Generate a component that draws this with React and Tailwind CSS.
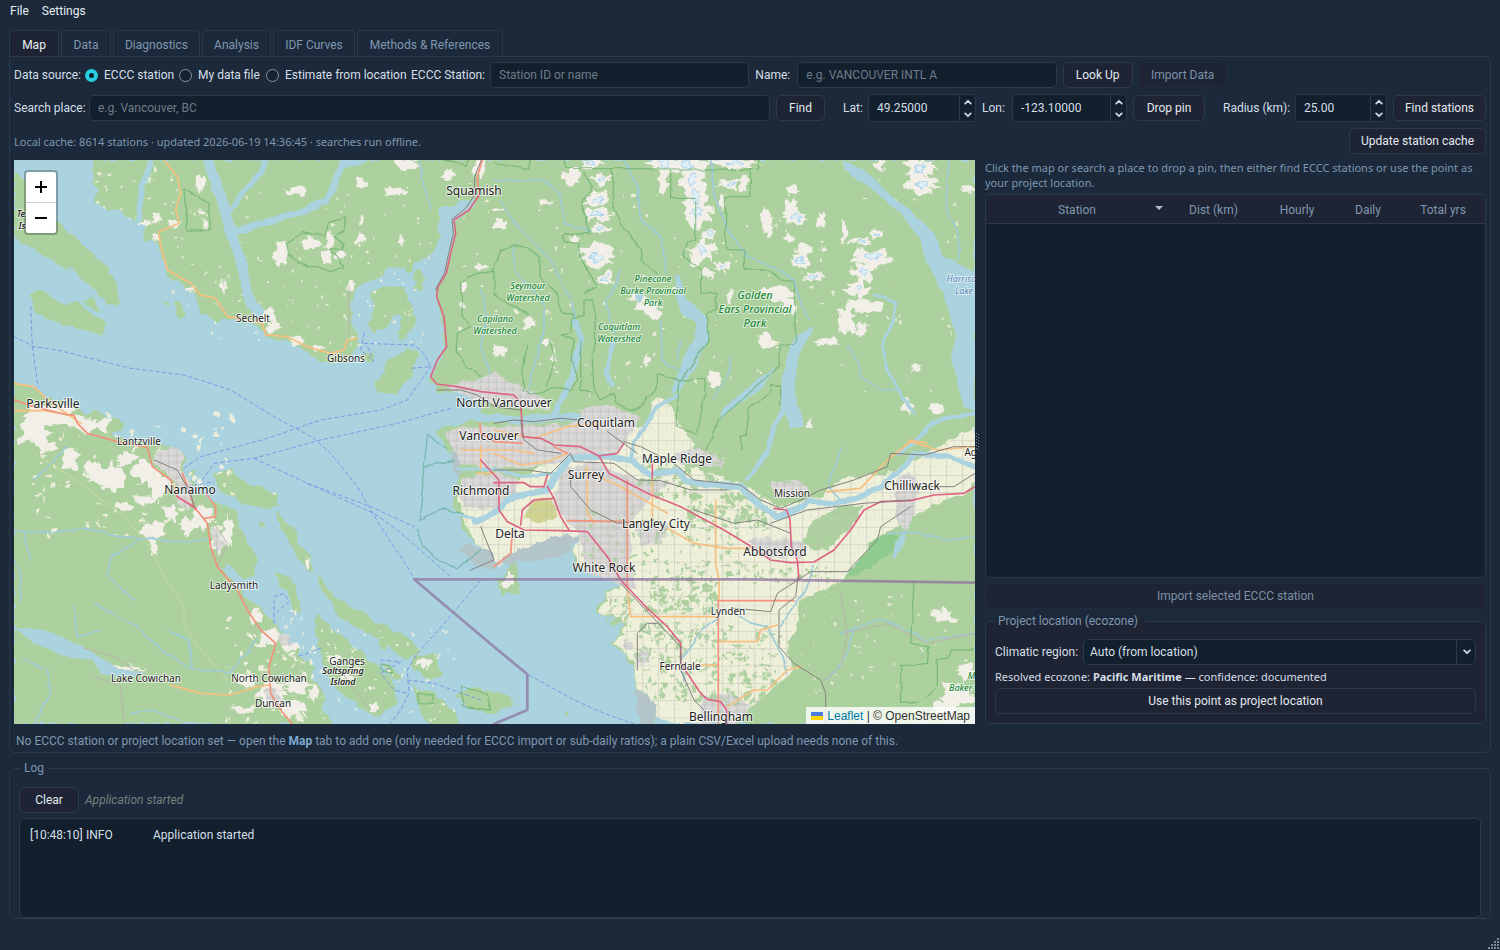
import React, { useState } from "react";

/* ---------- Map data ---------- */

// Geometry is stored in map units, three to a screen pixel.
const MAINLAND =
  "M240 0 L236 60 250 95 240 130 300 150 330 165 372 180 390 200 395 240 432 250 442 295 458 345 500 368 530 392 552 432 566 462 600 478 645 482 700 490 742 504 752 532 820 542 880 580 935 608 990 612 1018 585 1032 556 1028 520 1018 480 1014 430 1020 395 1050 370 1100 350 1130 325 1172 325 1192 335 1202 308 1240 290 1262 268 1280 225 1272 160 1290 142 1340 128 1385 108 1378 148 1325 172 1318 225 1308 285 1292 345 1266 392 1268 425 1288 485 1294 560 1270 618 1248 652 1262 680 1270 700 1340 692 1385 705 1400 735 1390 775 1350 795 1290 798 1265 812 1280 835 1300 870 1330 892 1336 930 1325 990 1320 1045 1342 1080 1352 1115 1380 1145 1430 1170 1455 1195 1440 1220 1480 1190 1500 1200 1515 1250 1520 1300 1462 1305 1450 1260 1480 1230 1500 1195 1560 1165 1640 1130 1690 1115 1700 1140 1675 1170 1680 1225 1740 1240 1780 1240 1822 1272 1770 1305 1750 1350 1750 1365 1810 1370 1830 1392 1820 1425 1785 1445 1840 1490 1860 1520 1868 1610 1890 1692 1920 1692 1945 1625 1990 1630 2040 1670 2070 1692 2883 1692 2883 0 Z";
const ISLAND =
  "M0 662 L60 680 100 712 180 732 215 760 250 755 322 792 328 812 290 812 300 832 400 850 470 862 512 885 520 905 505 935 520 960 545 965 552 995 580 1012 612 1030 670 1050 678 1100 700 1150 732 1200 715 1245 690 1255 640 1225 622 1220 680 1290 740 1350 780 1400 850 1462 858 1492 900 1520 895 1560 930 1595 925 1640 958 1692 0 1692 Z";
const ISLETS = [
  "M0 40 L60 80 130 180 200 250 280 320 305 360 318 400 312 440 280 432 240 390 170 332 110 300 60 270 0 225Z",
  "M45 405 L62 390 100 400 150 432 195 428 230 460 278 492 270 528 205 508 150 492 92 480 60 455Z",
  "M445 415 L462 418 468 438 455 432Z",
  "M482 422 L502 430 508 470 496 478 480 450Z",
  "M1068 392 L1120 375 1170 382 1190 430 1206 490 1180 530 1150 540 1165 470 1135 470 1120 500 1090 510 1075 530 1062 490 1082 440Z",
  "M1200 342 L1216 332 1230 350 1225 400 1202 388Z",
  "M1112 602 L1160 578 1212 565 1205 610 1188 655 1150 698 1090 698 1084 668 1112 640Z",
  "M1030 590 L1060 578 1082 590 1070 602 1040 602Z",
  "M205 425 L235 412 262 455 240 450Z",
  "M520 930 L540 935 538 955 524 950Z",
  "M600 938 L652 928 700 970 792 1002 790 1045 740 1045 680 1032 612 990Z",
  "M780 1055 L820 1080 860 1150 902 1220 892 1238 860 1210 822 1132 785 1080Z",
  "M915 1245 L960 1312 1030 1350 1100 1390 1192 1440 1215 1480 1170 1492 1080 1432 980 1372 920 1285Z",
  "M785 1235 L822 1250 850 1290 862 1362 840 1352 820 1302 792 1272Z",
  "M728 1080 L758 1100 752 1108 730 1090Z",
  "M905 1360 L950 1400 1000 1440 1062 1500 1135 1562 1148 1630 1100 1670 1050 1650 1000 1612 950 1572 922 1492 905 1412Z",
  "M1190 1492 L1262 1478 1292 1540 1242 1562 1200 1532Z",
  "M1200 1572 L1262 1600 1302 1640 1345 1692 1240 1692 1212 1632Z",
  "M1330 1600 L1400 1580 1505 1632 1440 1662 1360 1642Z",
  "M1100 1512 L1140 1522 1170 1560 1130 1552Z",
  "M1090 1440 L1120 1452 1118 1470 1095 1460Z",
  "M1440 1595 L1500 1610 1480 1625 1440 1615Z",
  "M1650 1650 L1665 1655 1660 1670 1648 1665Z",
];
const FARM =
  "M1560 930 L1640 905 1840 810 1900 790 1925 710 1975 740 1995 790 2040 850 2020 920 2180 970 2290 1040 2420 1010 2480 960 2620 940 2740 880 2883 800 2883 960 2840 1010 2770 1030 2680 1080 2600 1130 2520 1220 2470 1270 2360 1320 2340 1400 2320 1480 2340 1530 2280 1580 2220 1640 2140 1692 2000 1692 1920 1670 1870 1610 1860 1500 1795 1445 1830 1425 1835 1392 1812 1365 1755 1362 1775 1308 1828 1272 1790 1236 1690 1230 1680 1170 1700 1130 1540 1160 1460 1220 1380 1140 1345 1070 1335 1010 1440 1020Z";
const URBAN = [
  "M1290 680 L1400 655 1440 640 1500 670 1560 700 1600 722 1612 745 1500 745 1400 725Z",
  "M1290 812 L1360 800 1470 800 1700 790 1700 745 1800 740 1880 770 1850 830 1800 880 1680 895 1600 920 1440 925 1345 910 1310 862Z",
  "M1345 950 L1450 940 1520 960 1500 1005 1440 1045 1345 1045Z",
  "M1640 925 L1740 905 1840 955 1980 965 1910 1010 1850 1090 1850 1200 1865 1290 1720 1235 1695 1120 1620 1040Z",
  "M1860 1090 L1960 1085 1960 1130 1880 1160Z",
  "M1980 880 L2060 860 2140 890 2120 920 2000 915Z",
  "M2200 1140 L2260 1130 2350 1140 2380 1150 2370 1190 2250 1195Z",
  "M2270 970 L2330 955 2385 980 2370 1010 2280 1015Z",
  "M2640 960 L2690 940 2720 980 2700 1060 2680 1110 2650 1090Z",
  "M2060 1610 L2160 1600 2210 1640 2170 1692 2060 1692Z",
  "M430 870 L490 862 512 890 500 930 540 980 530 1050 490 1030 480 960 420 900Z",
  "M590 1100 L615 1110 635 1160 605 1180Z",
  "M1830 1440 L1850 1440 1850 1465 1830 1465Z",
  "M1860 1480 L1900 1470 1910 1510 1870 1520Z",
  "M785 1420 L820 1425 840 1455 800 1450Z",
  "M745 1590 L790 1580 800 1630 775 1640Z",
];
const FLATS = [
  "M1455 1215 L1480 1180 1560 1155 1660 1120 1700 1130 1672 1165 1640 1190 1560 1200Z",
  "M1330 1170 L1370 1150 1440 1180 1440 1230 1380 1210Z",
  "M1860 1590 L1900 1600 1930 1640 1920 1692 1880 1692Z",
  "M1320 880 L1345 900 1335 960 1320 950Z",
];
const HILLS = [
  "M2370 1140 L2400 1080 2480 1040 2550 1035 2530 1080 2490 1120 2440 1165 2400 1172Z",
  "M2180 840 L2290 800 2600 820 2610 880 2500 940 2380 960 2250 970 2190 960 2120 900 2040 860Z",
];

const LAKES = [
  "M2480 0 L2550 30 2620 100 2690 150 2760 220 2790 290 2850 320 2883 335 2883 755 2850 742 2812 600 2825 530 2790 400 2740 310 2720 240 2660 160 2580 90 2490 30Z",
  "M2400 500 L2380 540 2350 600 2342 700 2370 800 2330 805 2300 720 2305 640 2325 580 2340 530Z",
  "M2292 618 L2240 690 2160 742 2112 782 2128 742 2190 690 2250 645Z",
  "M1985 345 L1996 345 2012 420 2080 465 2084 540 2042 620 2000 690 1968 702 2010 590 2040 540 2048 490 2000 460 1985 400Z",
  "M0 1400 L90 1410 210 1460 250 1490 320 1528 400 1542 340 1552 262 1542 240 1502 150 1490 60 1450Z",
  "M2640 1150 L2680 1110 2670 1150 2640 1200Z",
  "M1860 395 L1890 400 1880 425 1862 415Z",
];
const CHANNELS = [
  [32, "580,-5 612,90 640,180 680,300 692,370 712,430 735,455"],
  [20, "665,215 760,185 860,160 940,120 968,60 980,12 1050,0"],
  [14, "650,150 700,80 740,40 755,0"],
  [18, "412,0 385,80 372,175"],
  [24, "1385,770 1450,772 1520,780 1600,775 1690,772"],
  [20, "1682,485 1702,540 1682,620 1660,690 1630,735 1618,775"],
  [14, "1800,540 1786,590 1776,640 1796,672"],
  [14, "2312,740 2282,800 2260,875 2200,960"],
  [9, "2580,405 2642,425 2640,480 2605,560 2625,640 2660,700 2700,760"],
  [20, "1380,1085 1440,1060 1500,1010 1600,990 1630,940 1670,895 1780,888 1860,905 1910,945 1990,930 2022,965 2080,975 2180,980 2230,1030 2290,1072 2340,1052"],
  [16, "2340,1052 2390,1020 2460,1030 2540,1010 2600,980 2660,930 2700,885 2800,885 2883,925"],
  [10, "1330,925 1440,930 1530,950 1620,940"],
  [12, "1220,1090 1290,1048 1350,1070 1400,1082 1460,1050"],
  [13, "2883,760 2790,775 2740,800 2700,850 2650,880"],
  [12, "1990,705 1930,740 1900,790 1860,850 1850,900"],
  [12, "640,1215 670,1250 715,1300"],
];
const STREAMS = [
  "1830,0 1870,80 1880,180 1940,230 1960,340",
  "2090,0 2100,100 2140,210 2200,290 2280,320 2340,360 2360,430 2390,480",
  "1440,60 1590,60 1640,100 1650,190 1730,215",
  "1460,120 1510,200 1610,300 1670,420 1682,485",
  "1500,260 1500,330 1590,430 1590,520 1550,650 1540,700",
  "2805,0 2795,140 2835,220 2830,300",
  "1820,330 1780,430 1800,520",
  "1250,150 1225,60 1222,0",
  "1400,390 1420,470 1400,560 1430,640",
  "0,1110 120,1120 210,1105 330,1130 480,1145 580,1140",
  "370,1145 290,1190 280,1250 360,1320",
  "240,1330 370,1400 450,1480 540,1530 650,1535 730,1440",
  "180,1340 190,1430 260,1410",
  "460,1410 520,1440 540,1530",
  "30,1500 100,1530 110,1600 60,1690",
  "0,1200 20,1240 20,1330",
  "60,960 120,900 160,860",
  "30,1110 50,1200",
  "350,1660 420,1650 500,1680",
  "2120,1370 2060,1410 2040,1450 2000,1500 2010,1560",
  "2160,1360 2210,1390 2260,1400 2280,1440 2310,1500 2320,1540",
  "2400,1220 2370,1300 2330,1350 2300,1400",
  "2480,1420 2600,1380 2660,1400 2740,1440 2883,1420",
  "2520,1400 2500,1480 2440,1560",
  "2620,1120 2700,1120 2800,1140 2883,1130",
  "2480,860 2440,980 2480,1020",
  "1940,480 1945,600 2000,640",
  "2150,590 2140,650 2100,720",
  "2000,540 1990,600",
  "2500,560 2530,600 2540,650 2600,690 2660,690",
];

const PARKS = [
  "M1650 0 L1655 25 2230 28 2235 0",
  "M1795 30 L1800 150 1820 190 1880 270 1880 300 1930 345",
  "M1970 30 L1970 115 2045 115 2045 240 2020 250 2010 290 2060 330 2060 400 2108 400 2105 450 2080 455 2085 540 2000 660 1960 650 1930 640 1930 680 1880 740 1850 752 1810 730 1800 700 1760 720 1740 690 1735 600 1745 540 1740 420 1710 420 1710 470 1680 475",
  "M2210 30 L2208 110 2135 110 2135 265 2190 268 2192 330 2270 330 2300 360 2340 365 2345 550 2295 560 2295 620 2160 740 2110 780 2080 870",
  "M1645 460 L1675 462 1670 520 1645 525 1680 540 1675 600 1690 650 1675 690 1620 680 1580 700 1550 702 1525 690 1525 640 1540 550",
  "M1645 460 L1630 400 1575 350 1575 290 1540 262 1500 255 1460 270 1440 330 1440 400 1480 430 1540 460",
  "M1995 660 L2075 658 2070 720 2050 820 1990 800 1990 700Z",
  "M1645 225 L1730 220 1700 130 1735 80 1710 40",
  "M1645 225 L1650 245 1695 250 1705 310 1750 380 1710 400",
  "M2180 870 L2180 830 2200 825 2200 750 2270 700 2270 675 2300 675 2300 740",
  "M1605 540 L1620 600 1600 680",
  "M1700 540 L1700 690 1735 700",
  "M510 90 L585 125 585 210 520 210Z",
  "M815 250 L870 215 930 230 940 190 995 170 990 210 960 230 990 250 985 270 945 265 990 320 950 335 910 320 880 320 820 285Z",
  "M1440 330 L1390 340 1340 370 1345 470 1370 500 1330 520 1330 580 1360 620 1400 650",
  "M2700 1265 L2690 1450 2745 1460 2740 1510 2660 1520 2660 1630 2710 1630",
  "M2883 1470 L2810 1470 2800 1495 2770 1495 2770 1580 2740 1610",
  "M1100 1515 L1130 1520 1135 1540 1105 1532Z",
  "M1210 1600 L1260 1605 1260 1630 1215 1628Z",
  "M1340 1580 L1420 1600 1430 1650 1350 1640Z",
  "M1440 8 L1548 25 1548 0",
  "M1290 0 L1360 20 1362 0",
];
const MARINE = [
  "M1240 825 L1230 920 1320 900",
  "M1232 925 L1215 1082 1290 1045 1350 1062",
  "M1210 1108 L1230 1160 1275 1200 1330 1230 1360 1200 1400 1172",
  "M1240 825 L1300 870",
];

const SNOW = [
  [560, 75, 15, 25], [575, 190, 10, 20], [560, 160, 12, 8], [840, 95, 30, 15], [800, 280, 22, 35], [890, 250, 25, 20],
  [945, 240, 15, 30], [940, 290, 20, 25], [975, 290, 15, 12], [1040, 65, 18, 12], [1140, 95, 35, 15], [1180, 15, 35, 20],
  [1300, 45, 20, 18], [1040, 235, 15, 12], [1163, 245, 7, 15], [1045, 180, 7, 14], [1400, 320, 20, 8], [755, 465, 30, 22],
  [430, 170, 15, 15], [480, 190, 20, 10], [400, 190, 20, 10], [420, 235, 15, 12], [1010, 380, 8, 15],
  [1730, 10, 35, 18], [1950, 10, 50, 34], [2020, 15, 60, 34], [2160, 10, 65, 22], [1675, 50, 25, 32], [1765, 55, 30, 18], [1750, 120, 45, 30],
  [1750, 165, 50, 20], [1760, 205, 30, 15], [1680, 235, 18, 10], [1750, 290, 55, 32], [1775, 355, 30, 18], [1950, 70, 15, 35],
  [2035, 60, 38, 50], [2045, 110, 38, 50], [2050, 155, 48, 42], [2150, 70, 35, 18], [2125, 125, 12, 24], [2190, 65, 16, 30], [2090, 220, 28, 17],
  [2065, 270, 42, 32], [2045, 305, 20, 18], [2080, 345, 20, 20], [2125, 318, 26, 15], [2150, 405, 12, 22], [1870, 415, 30, 20],
  [1910, 450, 42, 24], [1590, 125, 20, 12], [1455, 195, 20, 16], [2260, 190, 16, 45], [2335, 90, 24, 17], [2330, 145, 25, 30],
  [2345, 172, 38, 22], [2420, 180, 15, 28], [2325, 235, 18, 12], [2370, 270, 24, 14], [2360, 300, 28, 24], [2395, 350, 32, 14],
  [2290, 400, 48, 26], [2325, 440, 25, 30], [2260, 540, 28, 24], [2440, 545, 34, 13], [2490, 220, 9, 38], [2590, 220, 26, 12],
  [2545, 245, 40, 15], [2570, 290, 65, 25], [2550, 340, 35, 35], [2535, 385, 38, 25], [2550, 435, 60, 22], [2495, 480, 28, 45],
  [2545, 510, 22, 20], [2430, 268, 12, 10], [2720, 25, 45, 30], [2725, 75, 55, 28], [2600, 15, 12, 20], [2860, 90, 22, 10],
  [2100, 660, 22, 20], [1545, 490, 22, 16], [1455, 575, 26, 18], [1455, 150, 18, 8], [2710, 625, 16, 9], [2680, 740, 15, 20],
  [2765, 745, 20, 15], [1620, 590, 8, 26], [1900, 600, 14, 14], [2390, 810, 12, 35], [2790, 1370, 36, 22], [2830, 1600, 55, 40],
  [2860, 1540, 30, 25], [2800, 1640, 40, 28], [1350, 380, 12, 10], [1345, 440, 12, 10], [1600, 545, 18, 8],
];
const CLEARINGS = [
  [110, 770, 100, 30], [60, 820, 50, 40], [210, 790, 35, 25], [265, 795, 30, 20], [170, 900, 25, 30], [240, 940, 35, 35],
  [300, 950, 30, 50], [340, 890, 40, 22], [390, 930, 30, 35], [430, 970, 30, 45], [420, 1120, 35, 40], [390, 1020, 30, 18],
  [470, 1060, 22, 30], [520, 1100, 22, 25], [560, 1070, 30, 40], [640, 1110, 16, 40], [330, 1040, 20, 14], [100, 860, 30, 14],
  [420, 1170, 12, 25], [610, 1140, 26, 45], [725, 1370, 14, 22], [770, 1430, 30, 22], [740, 1450, 25, 12], [830, 1460, 22, 16], [770, 1600, 45, 30],
  [700, 1560, 40, 20], [850, 1580, 40, 22], [680, 1650, 50, 10], [830, 1650, 40, 25], [960, 1500, 22, 14], [1000, 1550, 20, 12],
  [1080, 1640, 18, 12], [1235, 1510, 26, 16], [900, 1600, 12, 25], [780, 1000, 8, 6], [880, 1210, 8, 14], [335, 1525, 50, 6],
  [780, 500, 25, 18], [850, 540, 30, 12], [910, 565, 20, 8], [530, 385, 18, 6], [630, 380, 8, 20], [1400, 20, 20, 30],
  [1485, 1265, 20, 28],
];

function rng(seed) {
  let s = seed;
  return () => {
    s = (s * 16807) % 2147483647;
    return s / 2147483647;
  };
}
function blob(cx, cy, rx, ry, rand) {
  const n = 18;
  let d = "";
  for (let i = 0; i < n; i++) {
    const a = (i / n) * Math.PI * 2;
    const k = 0.55 + rand() * 0.75;
    d += `${i ? "L" : "M"}${(cx + Math.cos(a) * rx * k).toFixed(1)} ${(cy + Math.sin(a) * ry * k).toFixed(1)}`;
  }
  return d + "Z";
}
function scatter(seed, count, x0, y0, x1, y1, max) {
  const r = rng(seed);
  let d = "";
  for (let i = 0; i < count; i++) {
    d += blob(x0 + r() * (x1 - x0), y0 + r() * (y1 - y0), 2 + r() * max, 2 + r() * max, r);
  }
  return d;
}
const snowRand = rng(77);
const SNOW_D = SNOW.map((s) => blob(...s, snowRand)).join("");
const ICE_D = SNOW.filter((s) => s[2] >= 26 && s[0] > 1440 && s[1] < 400 && s[0] !== 1910)
  .map(([x, y, rx, ry]) => blob(x, y, rx * 0.35, ry * 0.35, snowRand))
  .join("");
const CLEAR_D = CLEARINGS.map((s) => blob(...s, snowRand)).join("");
const PALE_D =
  scatter(5, 130, 480, 80, 1250, 560, 3) + scatter(9, 150, 1320, 60, 2850, 700, 4) + scatter(12, 90, 60, 760, 660, 1130, 9) +
  scatter(15, 60, 640, 1350, 900, 1690, 7) + scatter(19, 70, 900, 1400, 1320, 1690, 4) + scatter(21, 50, 2350, 1300, 2860, 1600, 3) +
  scatter(25, 20, 250, 20, 480, 180, 5);
const WOOD_D =
  scatter(31, 120, 1900, 1255, 2110, 1360, 8) + scatter(33, 110, 2020, 1000, 2260, 1110, 9) + scatter(37, 90, 1870, 1390, 2110, 1500, 7) +
  scatter(41, 50, 2120, 1390, 2300, 1520, 6) + scatter(43, 90, 1880, 900, 2190, 1010, 10) + scatter(47, 80, 1860, 1100, 2180, 1250, 6) +
  scatter(51, 60, 1900, 1500, 2110, 1620, 8) + scatter(53, 50, 1690, 1040, 1860, 1220, 5) + scatter(57, 60, 2130, 1530, 2290, 1640, 9) +
  scatter(59, 40, 1780, 1310, 1850, 1400, 6) + scatter(61, 40, 2180, 1220, 2460, 1270, 5);

const ferry = [
  "0,530 60,560 130,570 350,625 510,645 650,690 780,770 900,835 950,880 1030,980 1100,1100 1180,1220 1200,1255",
  "50,440 55,560 72,680",
  "510,925 560,890 760,835 920,780 1100,750 1180,720 1250,620",
  "565,960 600,910 720,895 920,840 1150,790 1310,745",
  "720,895 880,970 1080,1060 1150,1110 1310,1250",
  "880,970 1070,1040 1200,1100",
  "1050,550 1200,555 1230,580 1250,620 1190,625",
  "1050,520 1040,570 1080,605 1060,560",
  "1400,1260 1300,1380 1210,1480 1180,1530 1185,1600 1160,1650 1130,1690",
  "1180,1560 1260,1570 1400,1620",
  "1100,1500 1160,1505 1100,1540 1140,1590 1180,1600",
  "1545,1545 1680,1620 1770,1660 1860,1692",
  "780,1390 780,1310 810,1300 825,1325 790,1355",
  "855,1488 920,1465",
  "520,980 600,965",
];
const primary = [
  "450,0 490,50 500,100 485,150 495,190 435,215 440,260 460,330 530,370 560,405 605,415 640,470 700,480 745,490 755,525 820,530 880,560 950,580 990,570 1000,540 1030,535",
  "0,670 60,680 100,720 200,790",
  "0,752 90,752 180,766",
  "470,1575 560,1600 650,1605 730,1580 765,1575",
  "2105,1020 2105,1210 2115,1260 2115,1320",
  "1850,1370 2110,1370",
  "2110,1445 2230,1445 2240,1410 2290,1395",
  "2030,1515 2110,1515",
  "2140,1640 2220,1590 2260,1590 2320,1530 2360,1520",
  "1840,1280 1850,1370",
  "1960,1105 2040,1150 2140,1165 2220,1165",
  "1710,930 1820,980 1890,1020 1960,1060",
  "2440,995 2540,985 2620,900 2690,845 2770,870 2883,860",
  "1440,880 1520,915 1600,905 1660,880",
  "1340,870 1500,870 1560,880",
  "1440,810 1560,835 1660,800 1760,790",
  "1720,920 1720,1060 1740,1090",
  "1915,960 1915,1080",
  "2660,870 2690,840 2740,850",
  "1390,940 1440,940",
  "1400,860 1400,925",
];
const trunk = [
  "0,720 60,740 160,765 180,765 190,790 220,820 310,845 400,862 415,920 470,960 490,1010 540,1040 580,1090 590,1160 610,1220 670,1290 700,1350 740,1410 785,1450 765,1520 770,1600 800,1650 835,1692",
  "505,940 520,980 545,1050",
  "575,1000 605,1040 605,1070 570,1075",
  "1840,960 1840,1280",
  "1660,1082 1860,1085",
  "2113,1322 2113,1692",
  "2113,1322 2340,1322",
  "1405,0 1390,50 1395,110",
  "1440,1220 1490,1180 1495,1120",
  "1398,790 1400,820 1440,845 1525,850",
  "1660,880 1620,860",
];
const motorway = [
  "1395,105 1365,150 1320,180 1325,220 1310,280 1297,340 1272,380 1268,410 1290,470 1298,560 1270,600 1250,650 1268,672 1330,680 1400,695 1500,705 1520,730 1525,800 1525,830 1580,835 1620,855 1700,860 1755,888 1785,940 1900,1000 2000,1040 2130,1110 2220,1165 2270,1200 2330,1208 2400,1206 2460,1170 2510,1110 2550,1050 2600,1025 2690,1022 2760,1005 2850,1000 2883,980",
  "1400,900 1455,960 1455,1050 1480,1085 1530,1110 1640,1112 1720,1115 1780,1190 1820,1260 1900,1345 1960,1400 2000,1450 2000,1510 2060,1600 2080,1618 2120,1625 2138,1650 2140,1692",
  "1440,968 1530,968 1550,980 1590,980 1600,945",
  "1600,980 1620,1015 1560,1020 1525,1050 1520,1095",
  "1620,1015 1640,1070 1665,1110",
  "1755,888 1810,880 1830,850",
  "1915,955 1915,910",
  "2280,1045 2318,1050 2328,1080 2332,1160 2350,1200 2355,1260",
  "490,1010 545,1045",
];
const rails = [
  "1440,930 1540,930 1610,940 1670,880 1680,905 1800,910 1870,960 1940,962 2030,990 2140,990",
  "1830,845 1880,860 1980,910 2040,960 2180,975 2240,1020 2300,1045 2360,1020 2420,990 2520,960 2620,920 2630,880 2730,885 2820,860 2883,860",
  "2040,1050 2160,1090 2230,1080 2330,1120",
  "2270,1090 2380,1050 2550,1030 2690,1020",
  "2883,940 2820,980 2690,980",
  "2690,1040 2600,1100 2590,1140 2500,1235 2390,1235 2290,1300 2270,1355 2160,1345",
  "2352,1250 2345,1310 2295,1350 2295,1460 2340,1510 2420,1560 2435,1600 2435,1692",
  "1820,1270 2000,1460 2000,1530 2040,1620 2080,1660",
  "1870,1530 1870,1420 1900,1390 1930,1390",
  "1670,940 1670,980 1730,1050 1810,1090 1920,1080",
  "1440,790 1500,780 1560,785 1640,775 1700,780",
  "1780,815 1870,880",
  "1520,780 1530,840 1570,870 1640,880",
  "1270,690 1340,690 1390,705 1440,740 1520,750",
  "1400,1100 1440,1200 1370,1230",
  "420,900 490,930 530,1000 540,1040",
  "1402,0 1382,50 1382,105 1355,145 1314,178 1318,220 1304,280 1291,340 1264,390",
];
const local = [
  "960,1500 1020,1590 1060,1640",
  "210,1465 300,1490 360,1530",
  "240,1550 320,1580 330,1692",
  "2480,1300 2500,1420 2480,1520 2430,1560",
  "2490,1420 2620,1390 2740,1450 2883,1420",
  "1005,380 1005,520",
  "600,1090 640,1150 610,1220",
];

const cities = [
  [474, 191, 12, "Squamish"], [253, 318, 10, "Sechelt"], [346, 358, 10, "Gibsons"], [53, 404, 12, "Parksville"],
  [139, 441, 10, "Lantzville"], [190, 490, 12, "Nanaimo"], [234, 585, 10, "Ladysmith"], [146, 678, 10, "Lake Cowichan"],
  [269, 678, 10, "North Cowichan"], [273, 703, 10, "Duncan"], [347, 661, 10, "Ganges"], [504, 403, 12, "North Vancouver"],
  [489, 436, 12, "Vancouver"], [606, 423, 12, "Coquitlam"], [677, 459, 12, "Maple Ridge"], [586, 475, 12, "Surrey"],
  [481, 491, 12, "Richmond"], [510, 534, 12, "Delta"], [604, 568, 12, "White Rock"], [656, 524, 12, "Langley City"],
  [792, 493, 10, "Mission"], [912, 486, 12, "Chilliwack"], [775, 552, 12, "Abbotsford"], [728, 611, 10, "Lynden"],
  [680, 666, 10, "Ferndale"], [721, 717, 12, "Bellingham"], [982, 452, 10, "Agassiz"],
];
const parks = [
  [528, 286, 9, "Seymour"], [528, 298, 9, "Watershed"], [495, 319, 9, "Capilano"], [495, 331, 9, "Watershed"],
  [653, 279, 9, "Pinecone"], [653, 291, 9, "Burke Provincial"], [653, 303, 9, "Park"],
  [619, 327, 9, "Coquitlam"], [619, 339, 9, "Watershed"],
  [755, 295, 11, "Golden"], [755, 309, 11, "Ears Provincial"], [755, 323, 11, "Park"],
  [981, 676, 9, "Mount"], [972, 688, 9, "Baker Wild."],
];
const islandNames = [[343, 671, 9, "Saltspring"], [343, 682, 9, "Island"], [31, 214, 9, "Texada"], [31, 226, 9, "Island"]];
const lakes = [[964, 279, 9, "Harrison"], [964, 291, 9, "Lake"]];

function Labels({ items, className }) {
  return (
    <g className={className} textAnchor="middle" paintOrder="stroke" strokeLinejoin="round">
      {items.map(([x, y, size, name], i) => (
        <text key={i} x={x - 14} y={y - 160 + Math.round(size * 0.36)} fontSize={size}>
          {name}
        </text>
      ))}
    </g>
  );
}
const lines = (list) => list.map((p, i) => <polyline key={i} points={p} />);

function MapDrawing() {
  return (
    <svg
      className="absolute inset-0 h-full w-full font-['Noto_Sans',sans-serif]"
      viewBox="0 0 961 564"
      preserveAspectRatio="xMidYMid slice"
      role="img"
      aria-label="Map of the Vancouver region"
    >
      <defs>
        <filter id="rough" x="0" y="0" width="100%" height="100%" filterUnits="userSpaceOnUse">
          <feTurbulence type="fractalNoise" baseFrequency="0.09" numOctaves="3" seed="4" />
          <feDisplacementMap in="SourceGraphic" scale="9" xChannelSelector="R" yChannelSelector="G" />
        </filter>
        <filter id="wobble" x="0" y="0" width="100%" height="100%" filterUnits="userSpaceOnUse">
          <feTurbulence type="fractalNoise" baseFrequency="0.06" numOctaves="2" seed="9" />
          <feDisplacementMap in="SourceGraphic" scale="5" xChannelSelector="R" yChannelSelector="G" />
        </filter>
        <pattern id="grid" width="48" height="52" patternUnits="userSpaceOnUse">
          <path d="M0 10H48M14 0V52" stroke="#b9b9b4" strokeWidth="2" fill="none" />
          <path d="M0 36H30M38 10V36" stroke="#d2d2cc" strokeWidth="1.5" fill="none" />
        </pattern>
        <pattern id="streets" width="24" height="22" patternUnits="userSpaceOnUse">
          <path d="M0 6H24M8 0V22" stroke="#b4b4b4" strokeWidth="2" fill="none" />
          <path d="M0 15H24M18 0V22" stroke="#ececec" strokeWidth="1.5" fill="none" />
        </pattern>
        <clipPath id="farmClip">
          <path d={FARM} />
        </clipPath>
      </defs>
      <rect width="961" height="564" fill="#aad3df" />
      <g filter="url(#rough)">
        <g transform="scale(.33333)">
          <g fill="#add19e">
            <path d={MAINLAND} />
            <path d={ISLAND} />
            {ISLETS.map((d, i) => (
              <path key={i} d={d} />
            ))}
          </g>
          <path d={FARM} fill="#eff0da" />
          <g fill="#b3c5c9">
            {FLATS.map((d, i) => (
              <path key={i} d={d} />
            ))}
          </g>
          <path d={SNOW_D + CLEAR_D} fill="#f2efe9" />
          <path d={PALE_D} fill="#eeeedd" />
          <path d={ICE_D} fill="#e2eff4" stroke="#a9d3ee" strokeWidth="3" />
          <g fill="#d6d5d4">
            {URBAN.map((d, i) => (
              <path key={i} d={d} />
            ))}
          </g>
          <g fill="#add19e">
            {HILLS.map((d, i) => (
              <path key={i} d={d} />
            ))}
            <path d={WOOD_D} />
          </g>
          <path d="M1528 1075L1545 1035 1575 1018 1620 1020 1630 1070 1580 1090Z" fill="#d0d38f" />
          <path d="M2640 1120L2660 1130 2630 1180 2540 1240 2490 1255 2550 1180 2590 1130Z" fill="#8fca8f" />
        </g>
      </g>
      <g transform="scale(.33333)" clipPath="url(#farmClip)">
        <path d={FARM} fill="url(#grid)" opacity="0.7" />
      </g>
      <g transform="scale(.33333)" fill="url(#streets)" opacity="0.6">
        {URBAN.map((d, i) => (
          <path key={i} d={d} />
        ))}
      </g>
      <g filter="url(#wobble)">
        <g transform="scale(.33333)" fill="none" strokeLinecap="round" strokeLinejoin="round">
          <g fill="#aad3df">
            {LAKES.map((d, i) => (
              <path key={i} d={d} />
            ))}
          </g>
          <g stroke="#aad3df">
            {CHANNELS.map(([w, p], i) => (
              <polyline key={i} points={p} strokeWidth={w} />
            ))}
          </g>
          <g stroke="#9fcbd8" strokeWidth="5">{lines(STREAMS)}</g>
          <g stroke="#5dab63" strokeWidth="4" opacity="0.6">
            {PARKS.map((d, i) => (
              <path key={i} d={d} />
            ))}
          </g>
          <g stroke="#6cb3a4" strokeWidth="4" opacity="0.8">
            {MARINE.map((d, i) => (
              <path key={i} d={d} />
            ))}
          </g>
        </g>
      </g>
      <g transform="scale(.33333)" fill="none" strokeLinecap="round" strokeLinejoin="round">
        <g stroke="#7b9ae6" strokeWidth="3" strokeDasharray="11 9">{lines(ferry)}</g>
        <g stroke="#b9b3ab" strokeWidth="3">{lines(local)}</g>
        <polyline points="60,880 200,970 330,1070 400,1150 450,1250 510,1340 510,1400 560,1470 640,1560" stroke="#c6dba0" strokeWidth="3" />
        <g stroke="#f7bf80" strokeWidth="5">{lines(primary)}</g>
        <g stroke="#f0927c" strokeWidth="5">{lines(trunk)}</g>
        <g stroke="#dd6584" strokeWidth="5">{lines(motorway)}</g>
        <g stroke="#83807d" strokeWidth="3">{lines(rails)}</g>
        <path d="M2883 1268L2200 1258 1200 1258 1440 1460 1540 1543 1540 1650 1440 1692" stroke="#8c6d9c" strokeWidth="8" opacity="0.7" />
      </g>
      <Labels items={islandNames} className="fill-[#111] stroke-white/60 stroke-[2px] font-medium italic" />
      <Labels items={parks} className="fill-[#1c8a3a] stroke-white/60 stroke-[2px] font-medium italic" />
      <Labels items={lakes} className="fill-[#5b86bd] stroke-white/50 stroke-[2px] italic" />
      <Labels items={cities} className="fill-[#222] stroke-white/70 stroke-[2px]" />
    </svg>
  );
}

/* ---------- Controls ---------- */

const field = "h-[26px] rounded-[5px] border border-[#2a3a4b] bg-[#121f2d] px-2 text-[#d5dfe8] placeholder:text-[#6f7b88] outline-none";

function Button({ className = "", disabled, children }) {
  return (
    <button
      type="button"
      disabled={disabled}
      className={`h-[26px] shrink-0 rounded-[5px] border bg-[#1e2433] text-center whitespace-nowrap ${
        disabled ? "border-[#212b3b] text-[#7b90a8]" : "border-[#2a3a4b] text-[#e2e9f0]"
      } ${className}`}
    >
      {children}
    </button>
  );
}

function Chevron({ up }) {
  return (
    <svg viewBox="0 0 8 6" className="h-[6px] w-2" fill="none" stroke="#cbd8e4" strokeWidth="1.8" strokeLinecap="round" strokeLinejoin="round">
      <path d={up ? "M1.2 4.6 4 1.8 6.8 4.6" : "M1.2 1.4 4 4.2 6.8 1.4"} />
    </svg>
  );
}

function Spin({ id, value, step, digits, className }) {
  const [v, setV] = useState(value);
  const bump = (n) => setV((Number(v) + n * step).toFixed(digits));
  return (
    <div className={`flex h-7 shrink-0 overflow-hidden rounded-[5px] border border-[#2a3a4b] bg-[#121f2d] ${className}`}>
      <input
        id={id}
        type="number"
        step="any"
        value={v}
        onChange={(e) => setV(e.target.value)}
        className="w-full min-w-0 flex-1 appearance-none bg-transparent px-2 text-[#d5dfe8] outline-none [appearance:textfield] [&::-webkit-inner-spin-button]:appearance-none"
      />
      <div className="flex w-4 shrink-0 flex-col border-l border-[#2a3a4b]">
        <button type="button" aria-label="Increase" onClick={() => bump(1)} className="grid flex-1 place-items-center">
          <Chevron up />
        </button>
        <button type="button" aria-label="Decrease" onClick={() => bump(-1)} className="grid flex-1 place-items-center">
          <Chevron />
        </button>
      </div>
    </div>
  );
}

function Radio({ label, width, ...rest }) {
  return (
    <label className={`flex shrink-0 items-center gap-1.5 whitespace-nowrap ${width}`}>
      <input
        type="radio"
        name="source"
        className="size-[13px] shrink-0 appearance-none rounded-full border border-[#8795a5] bg-[#16222f] checked:border-4 checked:border-[#26cfe3] checked:bg-[#10202c]"
        {...rest}
      />
      {label}
    </label>
  );
}

const tabs = [
  ["Map", "w-[50px]"],
  ["Data", "w-[50px]"],
  ["Diagnostics", "w-[87px]"],
  ["Analysis", "w-[69px]"],
  ["IDF Curves", "w-[82px]"],
  ["Methods & References", "w-[146px]"],
];

export default function App() {
  return (
    <div className="flex min-h-screen flex-col bg-[#1b293a] font-['Roboto','Noto_Sans',sans-serif] text-[12px] leading-4 text-[#d5dfe8]">
      <nav className="flex h-[22px] items-center gap-[13px] px-2.5 text-[#e6edf4]">
        <button type="button">File</button>
        <button type="button">Settings</button>
      </nav>

      <div role="tablist" className="mt-2 flex gap-0.5 px-[9px]">
        {tabs.map(([name, w], i) => (
          <button
            key={name}
            type="button"
            role="tab"
            aria-selected={i === 0}
            className={`h-[27px] rounded-t-[5px] border border-b-0 border-[#2a3a4b] pt-0.5 whitespace-nowrap ${w} ${
              i === 0 ? "bg-[#1e2433] text-[#eaf0f6]" : "text-[#7f97b0]"
            }`}
          >
            {name}
          </button>
        ))}
      </div>

      <main className="mx-[9px] -mt-px flex flex-1 flex-col rounded-md rounded-tl-none border border-[#2a3a4b] px-1 pt-1">
        <div className="flex h-7 items-center gap-1.5">
          <span className="w-[65px] shrink-0 whitespace-nowrap">Data source:</span>
          <Radio label="ECCC station" width="w-[88px]" defaultChecked />
          <Radio label="My data file" width="w-[81px]" />
          <Radio label="Estimate from location" width="w-[139px]" />
          <label htmlFor="station" className="w-[73px] shrink-0 whitespace-nowrap">ECCC Station:</label>
          <input id="station" placeholder="Station ID or name" className={`min-w-0 flex-1 basis-0 ${field}`} />
          <label htmlFor="name" className="w-9 shrink-0 whitespace-nowrap">Name:</label>
          <input id="name" placeholder="e.g. VANCOUVER INTL A" className={`min-w-0 flex-1 basis-0 ${field}`} />
          <Button className="w-[70px]">Look Up</Button>
          <Button disabled className="w-[88px]">Import Data</Button>
          <span className="flex-1 px-1.5" />
        </div>

        <div className="mt-[5px] flex h-7 items-center gap-1.5">
          <label htmlFor="place" className="w-[69px] shrink-0 whitespace-nowrap">Search place:</label>
          <input id="place" placeholder="e.g. Vancouver, BC" className={`min-w-0 flex-1 ${field}`} />
          <Button className="w-[49px]">Find</Button>
          <label htmlFor="lat" className="ml-3 w-[19px] shrink-0 whitespace-nowrap">Lat:</label>
          <Spin id="lat" value="49.25000" step={0.01} digits={5} className="w-[108px]" />
          <label htmlFor="lon" className="w-6 shrink-0 whitespace-nowrap">Lon:</label>
          <Spin id="lon" value="-123.10000" step={0.01} digits={5} className="w-[115px]" />
          <Button className="w-[72px]">Drop pin</Button>
          <label htmlFor="radius" className="ml-3 w-[66px] shrink-0 whitespace-nowrap">Radius (km):</label>
          <Spin id="radius" value="25.00" step={1} digits={2} className="w-[92px]" />
          <Button className="w-[93px]">Find stations</Button>
        </div>

        <div className="mt-1.5 flex items-center justify-between">
          <p className="pt-0.5 font-['Noto_Sans',sans-serif] text-[11px] text-[#7f97b0]">Local cache: 8614 stations · updated 2026-06-19 14:36:45 · searches run offline.</p>
          <Button className="w-[137px]">Update station cache</Button>
        </div>

        <div className="mt-1.5 flex min-h-[564px] flex-1">
          <section className="relative min-w-0 flex-1 overflow-hidden">
            <MapDrawing />
            <div className="absolute top-2.5 left-2.5 flex flex-col overflow-hidden rounded border-2 border-black/25 bg-white bg-clip-padding text-black">
              <button type="button" aria-label="Zoom in" className="grid h-[31px] w-[30px] place-items-center border-b border-[#ccc]">
                <svg viewBox="0 0 12 12" className="size-3" stroke="currentColor" strokeWidth="2"><path d="M6 0V12M0 6H12" /></svg>
              </button>
              <button type="button" aria-label="Zoom out" className="grid h-[30px] w-[30px] place-items-center">
                <svg viewBox="0 0 12 12" className="size-3" stroke="currentColor" strokeWidth="2"><path d="M0 6H12" /></svg>
              </button>
            </div>
            <div className="absolute right-0 bottom-0 flex h-[17px] items-center gap-1 bg-white/80 px-[5px] font-['Liberation_Sans',sans-serif] text-[#333]">
              <svg viewBox="0 0 12 8" className="h-2 w-3"><path fill="#4c7be1" d="M0 0h12v4H0z" /><path fill="#ffd500" d="M0 4h12v4H0z" /></svg>
              <span><a href="#leaflet" className="text-[#0078a8]">Leaflet</a> | © OpenStreetMap</span>
            </div>
          </section>

          <div className="grid w-2.5 shrink-0 place-items-center">
            <svg viewBox="0 0 4 18" className="mr-1 h-[18px] w-1" fill="#6d8296">
              <path d="M0 0h1v1H0zM0 3h1v1H0zM0 6h1v1H0zM0 9h1v1H0zM0 12h1v1H0zM0 15h1v1H0zM2 1h1v1H2zM2 4h1v1H2zM2 7h1v1H2zM2 10h1v1H2zM2 13h1v1H2zM2 16h1v1H2z" />
            </svg>
          </div>

          <aside className="flex w-[501px] shrink-0 flex-col">
            <p className="font-['Noto_Sans',sans-serif] text-[11px] leading-[15px] text-[#7f97b0]">
              Click the map or search a place to drop a pin, then either find ECCC stations or use the point as<br />your project location.
            </p>
            <div className="mt-1 flex-1 overflow-hidden rounded-[5px] border border-[#2a3a4b] bg-[#121f2d]">
              <table className="w-full table-fixed border-collapse">
                <colgroup>
                  <col />
                  <col className="w-[91px]" />
                  <col className="w-[76px]" />
                  <col className="w-[66px]" />
                  <col className="w-[84px]" />
                </colgroup>
                <thead>
                  <tr className="h-7 border-b border-[#2a3a4b] bg-[#1e2433] text-[#7f97b0]">
                    <th scope="col" aria-sort="descending" className="pt-0.5 font-normal">
                      <span className="grid grid-cols-[1fr_auto_1fr] items-center">
                        <span />
                        <span>Station</span>
                        <svg viewBox="0 0 8 4" className="mr-[5px] mb-1 h-1 w-2 justify-self-end" fill="#b4c0cc"><path d="M0 0H8L4 4Z" /></svg>
                      </span>
                    </th>
                    <th scope="col" className="pt-0.5 font-normal">Dist (km)</th>
                    <th scope="col" className="pt-0.5 font-normal">Hourly</th>
                    <th scope="col" className="pt-0.5 font-normal">Daily</th>
                    <th scope="col" className="pt-0.5 font-normal">Total yrs</th>
                  </tr>
                </thead>
                <tbody />
              </table>
            </div>
            <Button disabled className="mt-[5px] w-full">Import selected ECCC station</Button>
            <fieldset className="mt-0.5 rounded-[5px] border border-[#2a3a4b] bg-[#1e2433] px-[9px] pb-[9px]">
              <legend className="h-5 pr-2 pl-[3px] leading-5 text-[#7f97b0]">Project location (ecozone)</legend>
              <div className="mt-2 flex items-center gap-1">
                <label htmlFor="region" className="w-[84px] shrink-0 whitespace-nowrap">Climatic region:</label>
                <div className="relative min-w-0 flex-1">
                  <select id="region" className="h-[26px] w-full appearance-none rounded-[5px] border border-[#2a3a4b] bg-[#121f2d] px-1.5 text-[#d5dfe8] outline-none">
                    <option>Auto (from location)</option>
                  </select>
                  <span className="pointer-events-none absolute inset-y-0 right-0 grid w-5 place-items-center border-l border-[#2a3a4b]">
                    <Chevron />
                  </span>
                </div>
              </div>
              <p className="mt-1 font-['Noto_Sans',sans-serif] text-[11px]">
                Resolved ecozone: <b>Pacific Maritime</b> — confidence: documented
              </p>
              <Button className="mt-[3px] w-full">Use this point as project location</Button>
            </fieldset>
          </aside>
        </div>

        <p className="px-0.5 pt-[9px] pb-[3px] text-[#7f97b0]">
          No ECCC station or project location set — open the <b className="text-[#7fa8cf]">Map</b> tab to add one (only needed for ECCC import or sub-daily ratios); a plain CSV/Excel upload needs none of this.
        </p>
      </main>

      <fieldset className="mx-[9px] mt-[5px] rounded-md border border-[#2a3a4b] px-[9px]">
        <legend className="ml-px h-5 px-1 leading-5 text-[#7f97b0]">Log</legend>
        <div className="mt-[9px] flex items-center gap-1.5">
          <Button className="w-[60px]">Clear</Button>
          <span className="text-[#75807f] italic">Application started</span>
        </div>
        <div role="log" className="mt-[5px] flex h-[100px] rounded-[5px] border border-[#2a3a4b] bg-[#121f2d] px-2.5 py-2">
          <span className="w-14">[10:48:10]</span>
          <span className="w-[67px]">INFO</span>
          <span>Application started</span>
        </div>
      </fieldset>

      <footer className="flex h-[31px] items-end justify-end">
        <svg viewBox="0 0 12 12" className="size-3" fill="#7d8b99">
          <path d="M9 0h2v2H9zM6 3h2v2H6zM9 3h2v2H9zM3 6h2v2H3zM6 6h2v2H6zM9 6h2v2H9zM0 9h2v2H0zM3 9h2v2H3zM6 9h2v2H6zM9 9h2v2H9z" />
        </svg>
      </footer>
    </div>
  );
}
